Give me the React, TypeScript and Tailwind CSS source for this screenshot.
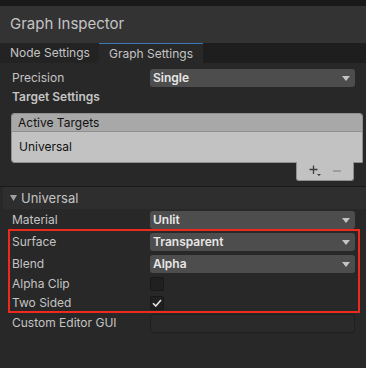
import React from "react";

const Arrow = () => (
  <svg width="8" height="5" viewBox="0 0 8 5" className="shrink-0">
    <path d="M0 0 L8 0 L4 5 Z" fill="#c4c4c4" />
  </svg>
);

const Dropdown = ({ value, h = "h-[18px]" }: { value: string; h?: string }) => (
  <div
    className={`flex-1 ${h} bg-[#4d4d4d] rounded-[3px] flex items-center justify-between pl-[3px] pr-[5px]`}
  >
    <span className="text-[12px] font-semibold text-[#e6e6e6] leading-none">{value}</span>
    <Arrow />
  </div>
);

const Row = ({
  label,
  children,
  h = "h-[22px]",
}: {
  label: string;
  children: React.ReactNode;
  h?: string;
}) => (
  <div className={`flex items-center ${h} pl-3 pr-[11px]`}>
    <span className="w-[138px] text-[12px] text-[#c4c4c4] leading-none">{label}</span>
    {children}
  </div>
);

const Checkbox = ({ checked }: { checked?: boolean }) => (
  <div className="w-[14px] h-[14px] bg-[#202020] border border-[#191919] rounded-[2px] flex items-center justify-center">
    {checked && (
      <svg width="10" height="8" viewBox="0 0 10 8">
        <path d="M1 4.2 L3.8 7 L9 1" stroke="#e6e6e6" strokeWidth="1.6" fill="none" />
      </svg>
    )}
  </div>
);

export default function App() {
  return (
    <div
      className="w-[366px] h-[368px] bg-[#282828] relative overflow-hidden"
      style={{ fontFamily: "Inter, 'Noto Sans', sans-serif" }}
    >
      <div className="h-[6px] bg-[#191919]" />
      <div className="h-[37px] bg-[#333333] flex items-center pl-[10px]">
        <span className="text-[15px] text-[#c4c4c4]">Graph Inspector</span>
      </div>
      {/* tabs */}
      <div className="h-[20px] bg-[#1e1e1e] flex">
        <div className="w-[99px] bg-[#232323] flex items-center pl-[10px]">
          <span className="text-[12px] text-[#c4c4c4]">Node Settings</span>
        </div>
        <div className="w-[104px] bg-[#282828] border-t border-[#3a79bb] flex items-center pl-[10px]">
          <span className="text-[12px] text-[#c4c4c4]">Graph Settings</span>
        </div>
      </div>

      <div className="pt-1">
        <Row label="Precision">
          <Dropdown value="Single" />
        </Row>
        <div className="h-[16px] flex items-center pl-3">
          <span className="text-[12px] font-semibold text-[#c4c4c4] leading-none">Target Settings</span>
        </div>

        {/* target list */}
        <div className="mt-2 ml-[11px] mr-[3px]">
          <div className="border border-[#8f8f8f] rounded-t-[3px] rounded-bl-[3px] overflow-hidden">
            <div className="h-[18px] bg-[#a8a8a8] border-b border-[#8f8f8f] flex items-center pl-[6px]">
              <span className="text-[12px] text-[#111111] leading-none">Active Targets</span>
            </div>
            <div className="h-[30px] bg-[#c2c2c2] flex items-center pl-[7px]">
              <span className="text-[12px] text-[#111111] leading-none">Universal</span>
            </div>
          </div>
          <div className="flex justify-end pr-[9px]">
            <div className="w-[58px] h-[19px] -mt-px bg-[#c2c2c2] border border-t-0 border-[#8f8f8f] rounded-b-[3px] flex items-center justify-around px-[6px]">
              <svg width="12" height="12" viewBox="0 0 12 12">
                <path d="M4.5 0.5 V9 M0.5 4.5 H8.5" stroke="#3c3c3c" strokeWidth="1.3" />
                <path d="M8 9 H12 L10 11 Z" fill="#3c3c3c" />
              </svg>
              <svg width="10" height="10" viewBox="0 0 10 10">
                <path d="M1 5 H9" stroke="#8a8a8a" strokeWidth="1.3" />
              </svg>
            </div>
          </div>
        </div>

        <div className="mt-[5px] h-px bg-[#1a1a1a]" />
        {/* foldout */}
        <div className="h-[22px] ml-[3px] bg-[#2e2e2e] flex items-center pl-[7px] gap-[4px]">
          <svg width="7" height="6" viewBox="0 0 7 6">
            <path d="M0 0 H7 L3.5 6 Z" fill="#a0a0a0" />
          </svg>
          <span className="text-[13px] text-[#c4c4c4] leading-none">Universal</span>
        </div>

        <Row label="Material">
          <Dropdown value="Unlit" />
        </Row>
        <Row label="Surface">
          <Dropdown value="Transparent" />
        </Row>
        <Row label="Blend">
          <Dropdown value="Alpha" />
        </Row>
        <Row label="Alpha Clip" h="h-[18px]">
          <Checkbox />
        </Row>
        <Row label="Two Sided" h="h-[19px]">
          <Checkbox checked />
        </Row>
        <Row label="Custom Editor GUI">
          <div className="flex-1 h-[19px] bg-[#2a2a2a] border border-[#1f1f1f] rounded-[3px]" />
        </Row>
      </div>

      {/* highlight annotation */}
      <div className="absolute left-[8px] top-[229px] w-[352px] h-[84px] border-[2px] border-[#ee2a1e] pointer-events-none" />
    </div>
  );
}
